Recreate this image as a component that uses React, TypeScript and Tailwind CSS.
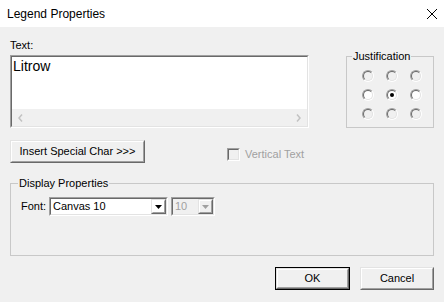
import clsx from "clsx";

// ── classic 3D bits ─────────────────────────────────────────────────────

function Sunken({ className, inner, children }: { className?: string; inner?: string; children?: React.ReactNode }) {
  return (
    <div className={clsx("border border-t-[#a0a0a0] border-l-[#a0a0a0] border-r-white border-b-white", className)}>
      <div className={clsx("h-full w-full border border-t-[#696969] border-l-[#696969] border-r-[#e3e3e3] border-b-[#e3e3e3]", inner)}>
        {children}
      </div>
    </div>
  );
}

function Raised({ className, inner, children }: { className?: string; inner?: string; children?: React.ReactNode }) {
  return (
    <div className={clsx("border border-t-[#e3e3e3] border-l-[#e3e3e3] border-r-[#696969] border-b-[#696969]", className)}>
      <div className={clsx("flex h-full w-full items-center justify-center border border-t-white border-l-white border-r-[#a0a0a0] border-b-[#a0a0a0]", inner)}>
        {children}
      </div>
    </div>
  );
}

function Radio({ checked, fill }: { checked?: boolean; fill: string }) {
  return (
    <div className="h-[12px] w-[12px] rounded-full border border-t-[#a0a0a0] border-l-[#a0a0a0] border-r-white border-b-white">
      <div className={clsx("flex h-full w-full items-center justify-center rounded-full border border-t-[#696969] border-l-[#696969] border-r-[#e3e3e3] border-b-[#e3e3e3]", fill)}>
        {checked && <div className="h-[4px] w-[4px] rounded-full bg-black" />}
      </div>
    </div>
  );
}

function Arrow({ color }: { color: string }) {
  return (
    <svg width="7" height="4" viewBox="0 0 7 4" aria-hidden="true">
      <path d="M0 0h7L3.5 4z" fill={color} />
    </svg>
  );
}

function Combo({ value, width, disabled }: { value: string; width: string; disabled?: boolean }) {
  return (
    <Sunken className={clsx("h-[19px]", width)} inner={clsx("flex items-stretch", disabled ? "bg-[#f0f0f0]" : "bg-white")}>
      <span className={clsx("flex-1 pl-[2px] leading-[15px]", disabled ? "text-[#a0a0a0]" : "text-black")}>{value}</span>
      <Raised className="w-[15px]">
        <Arrow color={disabled ? "#a0a0a0" : "#000"} />
      </Raised>
    </Sunken>
  );
}

// ── Dialog ──────────────────────────────────────────────────────────────

export default function App() {
  return (
    <div className="flex h-[302px] w-[444px] flex-col overflow-hidden bg-[#f0f0f0] font-['Liberation_Sans',Arial,sans-serif] text-[11px] text-black">
      {/* title bar */}
      <div className="flex h-[27px] items-center justify-between bg-white pl-[7px] pr-[7px]">
        <span className="text-[12px]">Legend Properties</span>
        <svg width="10" height="10" viewBox="0 0 10 10" aria-hidden="true">
          <path d="M0 0l10 10M10 0L0 10" stroke="#000" strokeWidth="1" />
        </svg>
      </div>

      <div className="flex flex-col px-[10px]">
        {/* text + justification */}
        <div className="mt-[12px] flex items-start justify-between">
          <div className="flex w-[299px] flex-col">
            <span className="h-[13px] leading-[13px]">Text:</span>
            <Sunken className="mt-[3px] h-[73px]" inner="flex flex-col bg-white">
              <span className="flex-1 pl-[1px] pt-[1px] text-[14px] leading-[16px]">Litrow</span>
              <div className="flex h-[17px] items-center justify-between bg-[#f0f0f0] px-[6px]">
                <svg width="5" height="8" viewBox="0 0 5 8" aria-hidden="true">
                  <path d="M4 0.5L1 4l3 3.5" fill="none" stroke="#c2c2c2" strokeWidth="1.5" />
                </svg>
                <svg width="5" height="8" viewBox="0 0 5 8" aria-hidden="true">
                  <path d="M1 0.5L4 4L1 7.5" fill="none" stroke="#c2c2c2" strokeWidth="1.5" />
                </svg>
              </div>
            </Sunken>
          </div>

          <fieldset className="mt-[11px] h-[78px] w-[88px] border border-[#c8c8c8]">
            <legend className="ml-[5px] px-[1px] leading-[13px]">Justification</legend>
            <div className="grid grid-cols-[12px_12px_12px] gap-x-[12px] gap-y-[7px] pl-[15px] pt-[7px]">
              {Array.from({ length: 9 }).map((_, i) => (
                <Radio key={i} checked={i === 4} fill={i >= 3 && i <= 5 ? "bg-white" : "bg-[#f0f0f0]"} />
              ))}
            </div>
          </fieldset>
        </div>

        {/* special char + vertical text */}
        <div className="mt-[12px] flex items-start">
          <Raised className="h-[23px] w-[135px]">Insert Special Char &gt;&gt;&gt;</Raised>
          <div className="ml-[82px] mt-[8px] flex items-center gap-[5px]">
            <Sunken className="h-[13px] w-[13px]" inner="bg-[#f0f0f0]" />
            <span className="leading-[13px] text-[#a0a0a0]">Vertical Text</span>
          </div>
        </div>

        {/* display properties */}
        <fieldset className="mt-[14px] h-[79px] border border-[#c8c8c8]">
          <legend className="ml-[7px] px-[1px] leading-[13px]">Display Properties</legend>
          <div className="flex items-center pl-[10px] pt-[7px]">
            <span className="w-[28px]">Font:</span>
            <Combo value="Canvas 10" width="w-[119px]" />
            <Combo value="10" width="ml-[3px] w-[44px]" disabled />
          </div>
        </fieldset>

        {/* OK / Cancel */}
        <div className="mt-[11px] flex justify-end gap-[10px]">
          <div className="h-[23px] w-[75px] border border-black">
            <Raised className="h-full w-full">OK</Raised>
          </div>
          <Raised className="h-[23px] w-[74px]">Cancel</Raised>
        </div>
      </div>
    </div>
  );
}
